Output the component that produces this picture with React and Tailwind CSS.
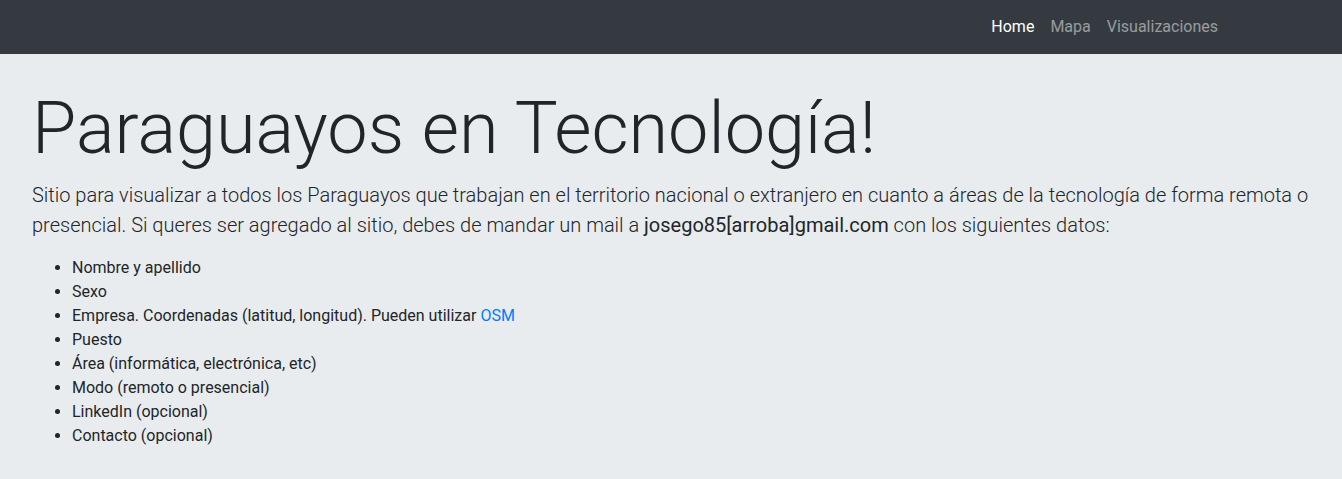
import React from 'react';

const campos = [
  'Nombre y apellido',
  'Sexo',
  null, // empresa, lleva el link a OSM
  'Puesto',
  'Área (informática, electrónica, etc)',
  'Modo (remoto o presencial)',
  'LinkedIn (opcional)',
  'Contacto (opcional)',
];

export default function App() {
  return (
    <div className="min-h-[479px] bg-[#e9ecef] text-[#212529] font-['Roboto',_'Liberation_Sans',_sans-serif]">
      {/* Navbar */}
      <nav className="h-[54px] bg-[#343a40]">
        <div className="mx-auto flex h-full w-[1140px] items-center justify-end px-[15px]">
          <a href="#" className="px-2 text-base leading-6 text-white">Home</a>
          <a href="#" className="px-2 text-base leading-6 text-white/50">Mapa</a>
          <a href="#" className="px-2 text-base leading-6 text-white/50">Visualizaciones</a>
        </div>
      </nav>

      {/* Jumbotron */}
      <div className="px-8 pt-8 pb-8">
        <h1 className="mb-2 text-[72px] font-light leading-[1.2]">Paraguayos en Tecnología!</h1>
        <p className="mb-4 text-[20px] font-light leading-[30px]">
          Sitio para visualizar a todos los Paraguayos que trabajan en el territorio nacional o extranjero en cuanto a áreas de la tecnología de forma remota o presencial. Si queres ser agregado al sitio, debes de mandar un mail a{' '}
          <b className="font-normal">josego85[arroba]gmail.com</b> con los siguientes datos:
        </p>
        <ul className="mt-px mb-4 list-disc pl-10 text-base leading-6">
          {campos.map((c, i) =>
            c ? (
              <li key={i}>{c}</li>
            ) : (
              <li key={i}>
                Empresa. Coordenadas (latitud, longitud). Pueden utilizar{' '}
                <a href="#" className="text-[#007bff]">OSM</a>
              </li>
            )
          )}
        </ul>
      </div>
    </div>
  );
}
